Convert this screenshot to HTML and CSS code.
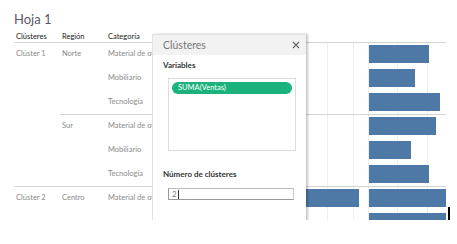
FILE: index.html
```html
<!DOCTYPE html>
<html>
<head>
    <title>Hoja 1</title>
    <link rel="stylesheet" href="styles.css">
</head>
<body>
    <div id="sheet">
        <div class="title">Hoja 1</div>
        <div class="hdr">
            <div class="cell">Clústeres</div>
            <div class="cell">Región</div>
            <div class="cell">Categoría</div>
        </div>

        <div class="row sep-c">
            <div class="cell">Clúster 1</div>
            <div class="cell">Norte</div>
            <div class="cell">Material de oficina</div>
            <div class="pane1"></div>
            <div class="pane2"><div class="bar" style="width: 60px"></div></div>
        </div>
        <div class="row">
            <div class="cell"></div>
            <div class="cell"></div>
            <div class="cell">Mobiliario</div>
            <div class="pane1"></div>
            <div class="pane2"><div class="bar" style="width: 46px"></div></div>
        </div>
        <div class="row">
            <div class="cell"></div>
            <div class="cell"></div>
            <div class="cell">Tecnología</div>
            <div class="pane1"></div>
            <div class="pane2"><div class="bar" style="width: 71px"></div></div>
        </div>
        <div class="row sep-r">
            <div class="cell"></div>
            <div class="cell">Sur</div>
            <div class="cell">Material de oficina</div>
            <div class="pane1"></div>
            <div class="pane2"><div class="bar" style="width: 67px"></div></div>
        </div>
        <div class="row">
            <div class="cell"></div>
            <div class="cell"></div>
            <div class="cell">Mobiliario</div>
            <div class="pane1"></div>
            <div class="pane2"><div class="bar" style="width: 42px"></div></div>
        </div>
        <div class="row">
            <div class="cell"></div>
            <div class="cell"></div>
            <div class="cell">Tecnología</div>
            <div class="pane1"></div>
            <div class="pane2"><div class="bar" style="width: 60px"></div></div>
        </div>
        <div class="row sep-c">
            <div class="cell">Clúster 2</div>
            <div class="cell">Centro</div>
            <div class="cell">Material de oficina</div>
            <div class="pane1"><div class="bar" style="width: 207px"></div></div>
            <div class="pane2"><div class="bar" style="width: 77px"></div></div>
        </div>
        <div class="row">
            <div class="cell"></div>
            <div class="cell"></div>
            <div class="cell"></div>
            <div class="pane1"></div>
            <div class="pane2"><div class="bar" style="width: 77px"></div></div>
        </div>

        <div id="dialog">
            <div class="dlg-head">
                <span>Clústeres</span>
                <svg class="close" width="8" height="8" viewBox="0 0 8 8">
                    <path d="M1 1 L7 7 M7 1 L1 7" stroke="#666" stroke-width="1.1" fill="none"/>
                </svg>
            </div>
            <div class="dlg-body">
                <div class="label">Variables</div>
                <div class="varlist">
                    <div class="pill">SUMA(Ventas)</div>
                </div>
                <div class="label num">Número de clústeres</div>
                <div class="input">2<span class="caret"></span></div>
            </div>
        </div>
    </div>
    <div id="marker"></div>
</body>
</html>
```

FILE: styles.css
```css
body{margin: 0;background: #fff;font-family: Lato, "Open Sans", sans-serif;position: relative;}
#sheet{height: 220px;overflow: hidden;position: relative;padding-left: 14px;}
.title{padding-top: 11px;height: 19px;font-size: 13px;color: #5d5566;}
.hdr{display: flex;height: 12px;color: #222;align-items: center;}
.cell{width: 46px;padding-left: 2px;box-sizing: border-box;white-space: nowrap;overflow: hidden;font-size: 7.5px;}
.row{display: flex;height: 24px;box-sizing: border-box;border-top: 1px solid transparent;color: #8a8a8a;}
.row .cell{line-height: 22px;}
.row > div{border-top: 1px solid transparent;margin-top: -1px;}
.row.sep-c > div{border-top-color: #d4d4d4;}
.row.sep-r > div:not(:first-child){border-top-color: #d4d4d4;}
.pane1{width: 210px;border-left: 1px solid #ececec;box-sizing: border-box;padding-top: 2px;
  background: linear-gradient(to right, transparent 174px, #eee 174px, #eee 175px, transparent 175px, transparent 200px, #eee 200px, #eee 201px, transparent 201px);}
.pane2{width: 84px;padding: 2px 0 0 7px;box-sizing: border-box;
  background: linear-gradient(to right, transparent 6px, #eee 6px, #eee 7px, transparent 7px, transparent 35px, #eee 35px, #eee 36px, transparent 36px, transparent 65px, #eee 65px, #eee 66px, transparent 66px);}
.bar{height: 18px;background: #4e79a7;}
.pane1 .bar{margin-left: -1px;}

#dialog{position: absolute;left: 152px;top: 34px;width: 153px;height: 200px;background: #fff;border: 1px solid #e2e2e2;border-right: 0;box-shadow: 2px 0 2px rgba(0,0,0,0.22);}
.dlg-head{height: 20px;background: #f2f2f2;display: flex;align-items: center;justify-content: space-between;padding: 0 6px 0 10px;font-size: 10.5px;color: #777;}
.dlg-body{padding: 5px 10px 0 10px;}
.label{font-size: 8px;font-weight: bold;color: #333;}
.varlist{margin: 8px 0 0 5px;height: 73px;border: 1px solid #ddd;box-sizing: border-box;padding: 3px;}
.pill{height: 12px;border-radius: 6px;background: #1cb27d;color: #fff;font-size: 7.5px;line-height: 12px;padding-left: 6px;}
.label.num{margin-top: 18px;}
.input{margin: 9px 0 0 5px;height: 12px;width: 126px;box-sizing: border-box;border: 1px solid #999;border-top-color: #bbb;border-right-color: #ccc;font-size: 8px;line-height: 10px;color: #777;padding-left: 3px;display: flex;align-items: center;}
.caret{width: 1px;height: 9px;background: #333;margin-left: 1px;}
#marker{position: absolute;left: 448px;top: 207px;width: 2px;height: 16px;background: #000;}
```
